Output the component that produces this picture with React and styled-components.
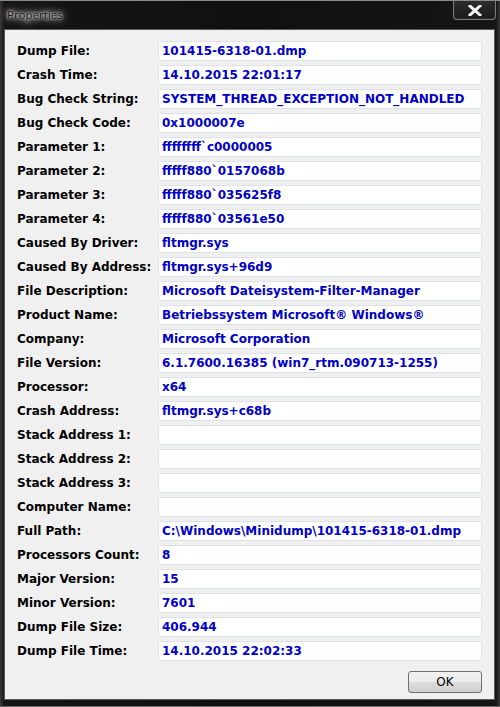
import styled, { createGlobalStyle } from "styled-components";

const GlobalStyle = createGlobalStyle`
  html, body {
    margin: 0;
    padding: 0;
    background: #0c0c0c;
  }
`;

const rows = [
    ["Dump File:", "101415-6318-01.dmp"],
    ["Crash Time:", "14.10.2015 22:01:17"],
    ["Bug Check String:", "SYSTEM_THREAD_EXCEPTION_NOT_HANDLED"],
    ["Bug Check Code:", "0x1000007e"],
    ["Parameter 1:", "ffffffff`c0000005"],
    ["Parameter 2:", "fffff880`0157068b"],
    ["Parameter 3:", "fffff880`035625f8"],
    ["Parameter 4:", "fffff880`03561e50"],
    ["Caused By Driver:", "fltmgr.sys"],
    ["Caused By Address:", "fltmgr.sys+96d9"],
    ["File Description:", "Microsoft Dateisystem-Filter-Manager"],
    ["Product Name:", "Betriebssystem Microsoft® Windows®"],
    ["Company:", "Microsoft Corporation"],
    ["File Version:", "6.1.7600.16385 (win7_rtm.090713-1255)"],
    ["Processor:", "x64"],
    ["Crash Address:", "fltmgr.sys+c68b"],
    ["Stack Address 1:", ""],
    ["Stack Address 2:", ""],
    ["Stack Address 3:", ""],
    ["Computer Name:", ""],
    ["Full Path:", "C:\\Windows\\Minidump\\101415-6318-01.dmp"],
    ["Processors Count:", "8"],
    ["Major Version:", "15"],
    ["Minor Version:", "7601"],
    ["Dump File Size:", "406.944"],
    ["Dump File Time:", "14.10.2015 22:02:33"],
];

function App() {
    return (
        <Styled.Window>
            <GlobalStyle />
            <Styled.TitleBar>
                <Styled.Title>Properties</Styled.Title>
                <Styled.CloseButton>
                    <svg width="14" height="11" viewBox="0 0 14 11">
                        <path d="M2 1 L12 10 M12 1 L2 10" stroke="#f2f2f2" strokeWidth="3" strokeLinecap="square" />
                    </svg>
                </Styled.CloseButton>
            </Styled.TitleBar>
            <Styled.Panel>
                <Styled.Grid>
                    {rows.map(([label, value]) => (
                        <Styled.Row key={label}>
                            <Styled.Label>{label}</Styled.Label>
                            <Styled.Value>{value}</Styled.Value>
                        </Styled.Row>
                    ))}
                </Styled.Grid>
                <Styled.Footer>
                    <Styled.OkButton>OK</Styled.OkButton>
                </Styled.Footer>
            </Styled.Panel>
        </Styled.Window>
    );
}

export default App;

const Styled = {
    Window: styled.div`
    width: 500px;
    height: 707px;
    box-sizing: border-box;
    display: flex;
    flex-direction: column;
    padding: 0 5px 6px 4px;
    background: linear-gradient(90deg, #3a3a3a 0, #151515 4px, #101010 50%, #151515 calc(100% - 4px), #3a3a3a 100%);
    border-top: 1px solid #8a8a8a;
    border-bottom: 1px solid #6a6a6a;
    `,
    TitleBar: styled.div`
    height: 28px;
    flex: none;
    display: flex;
    justify-content: space-between;
    align-items: flex-start;
    `,
    Title: styled.div`
    margin: 6px 0 0 3px;
    padding: 0 8px 0 0;
    font-family: "Open Sans", sans-serif;
    font-size: 11.5px;
    color: #111;
    text-shadow: 0 0 2px #f0f0f0, 0 0 4px #e0e0e0, 0 0 8px #c8c8c8, 0 0 12px #9a9a9a;
    `,
    CloseButton: styled.div`
    width: 43px;
    height: 19px;
    margin: 0 -1px 0 0;
    box-sizing: border-box;
    display: flex;
    align-items: center;
    justify-content: center;
    border: 1px solid #7a7a7a;
    border-top: none;
    border-radius: 0 0 4px 4px;
    background: linear-gradient(#2c2c2c, #1a1a1a);
    box-shadow: inset 0 0 0 1px #2a2a2a;
    `,
    Panel: styled.div`
    flex: 1;
    display: flex;
    flex-direction: column;
    background: #f0f0f0;
    border: 1px solid #5a5a5a;
    box-sizing: border-box;
    padding: 11px 12px 0 12px;
    `,
    Grid: styled.div`
    display: flex;
    flex-direction: column;
    gap: 4px;
    `,
    Row: styled.div`
    display: grid;
    grid-template-columns: 141px 1fr;
    align-items: center;
    height: 20px;
    `,
    Label: styled.div`
    font-family: "DejaVu Sans", sans-serif;
    font-weight: bold;
    font-size: 12px;
    color: #000;
    white-space: nowrap;
    `,
    Value: styled.div`
    height: 20px;
    box-sizing: border-box;
    padding: 0 0 0 3px;
    line-height: 18px;
    background: #fff;
    border: 1px solid #dde2e8;
    border-radius: 2px;
    font-family: "DejaVu Sans", sans-serif;
    font-weight: bold;
    font-size: 12px;
    color: #0000c8;
    white-space: nowrap;
    overflow: hidden;
    `,
    Footer: styled.div`
    display: flex;
    justify-content: flex-end;
    margin-top: 10px;
    `,
    OkButton: styled.button`
    width: 74px;
    height: 22px;
    padding: 0;
    border: 1px solid #707070;
    border-radius: 3px;
    background: linear-gradient(#f2f2f2 0, #ebebeb 50%, #dddddd 51%, #cfcfcf 100%);
    font-family: "DejaVu Sans", sans-serif;
    font-size: 12px;
    color: #000;
    `,
};
